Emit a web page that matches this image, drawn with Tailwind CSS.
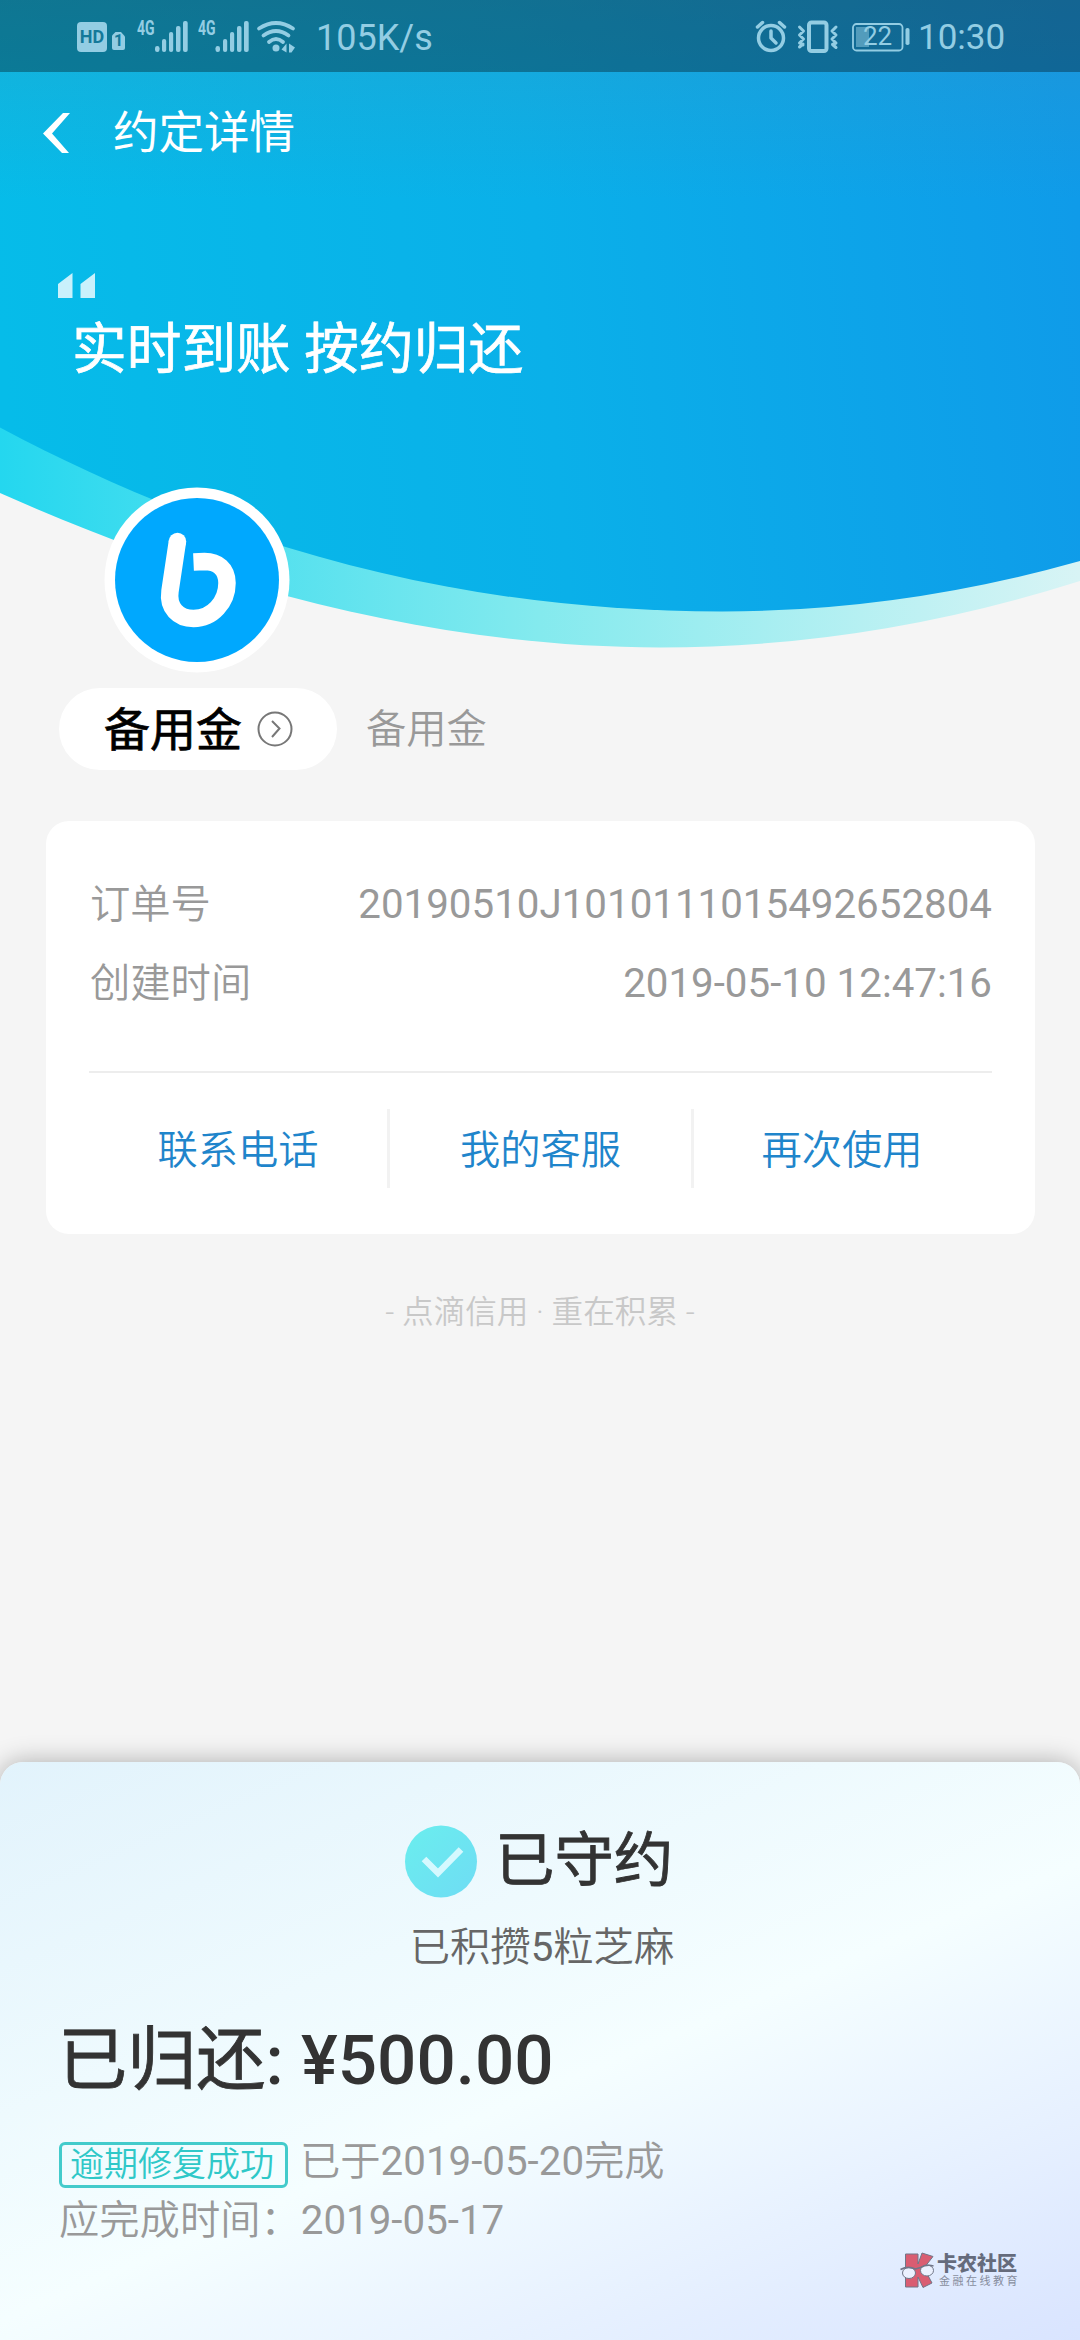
<!DOCTYPE html>
<html lang="zh-CN">
<head>
<meta charset="utf-8">
<title>约定详情</title>
<script src="https://cdn.jsdelivr.net/npm/@tailwindcss/browser@4"></script>
</head>
<body class="w-[1080px] h-[2340px] overflow-hidden bg-[#f5f5f5] font-['Roboto','Noto_Sans_CJK_SC',sans-serif]">
<div class="relative flex flex-col w-[1080px] h-[2340px]">
  <!-- header backdrop -->
  <svg class="absolute left-0 top-0" width="1080" height="660" viewBox="0 0 1080 660">
    <defs>
      <linearGradient id="sky" gradientUnits="userSpaceOnUse" x1="0" y1="330" x2="1080" y2="230"><stop offset="0" stop-color="#06bce9"/><stop offset=".5" stop-color="#0ab0e9"/><stop offset="1" stop-color="#0f9be9"/></linearGradient>
      <linearGradient id="band" gradientUnits="userSpaceOnUse" x1="0" y1="0" x2="1080" y2="0"><stop offset="0" stop-color="#24d7ef"/><stop offset=".5" stop-color="#84eaee"/><stop offset="1" stop-color="#d8f4f5"/></linearGradient>
      <linearGradient id="shade" x1="0" y1="0" x2="0" y2="1"><stop offset="0" stop-color="#5a8094" stop-opacity=".2"/><stop offset="1" stop-color="#5a8094" stop-opacity="0"/></linearGradient>
    </defs>
    <path d="M0 0H1080V581Q870 647.5 660 647.5C440 647.5 217 590 0 493Z" fill="url(#band)"/>
    <path d="M0 0H1080V561Q901 611.500 722 611.500C470 611.500 233 552 0 427.500Z" fill="url(#sky)"/>
    <rect width="1080" height="200" fill="url(#shade)"/>
  </svg>

  <!-- status bar -->
  <div class="relative h-[72px] shrink-0 bg-black/32 text-[#93cde3]">
    <svg class="absolute left-0 top-0" width="310" height="72" viewBox="0 0 310 72" fill="currentColor">
      <rect x="77" y="22" width="30" height="30" rx="4"/>
      <path d="M115.500 32H121L125 36.500V48Q125 50 123 50H114Q112 50 112 48V35.500Z"/>
      <rect x="155" y="46" width="4.500" height="6" rx="2.200"/><rect x="162" y="39" width="4.200" height="13" rx="2"/><rect x="169" y="32" width="4.200" height="20" rx="2"/><rect x="176" y="26" width="4.500" height="26" rx="2"/><rect x="183" y="21" width="4.700" height="31" rx="2"/>
      <rect x="215.500" y="46" width="4.500" height="6" rx="2.200"/><rect x="223" y="39" width="4.200" height="13" rx="2"/><rect x="230" y="32" width="4.200" height="20" rx="2"/><rect x="237" y="26" width="4.500" height="26" rx="2"/><rect x="244" y="21" width="4.700" height="31" rx="2"/>
      <g fill="none" stroke="currentColor" stroke-width="3.800" stroke-linecap="round"><path d="M259 28.500Q276 17.500 293 28.500"/><path d="M263.500 35.500Q276 26.500 288.500 35.500"/><path d="M269 42Q276 36 283 42"/></g>
      <circle cx="276" cy="48" r="3.500"/>
      <path d="M286.500 43.500V52.500L281.500 49.500ZM289 43.500L295 47.500L291.500 52.500H289Z"/>
    </svg>
    <span class="absolute left-[79px] top-[27px] w-[26px] h-5 leading-5 text-center text-[18px] font-bold text-[#14799a]">HD</span>
    <span class="absolute left-[113px] top-[33px] w-[11px] h-4 leading-4 text-center text-[16px] font-bold text-[#14799a]">1</span>
    <span class="absolute left-[137px] top-[18px] leading-5 text-[20px] font-bold origin-left scale-x-70">4G</span>
    <span class="absolute left-[198px] top-[18px] leading-5 text-[20px] font-bold origin-left scale-x-70">4G</span>
    <span class="absolute left-[316px] top-[18px] leading-10 text-[36px]">105K/s</span>
    <svg class="absolute left-[750px] top-0" width="165" height="72" viewBox="750 0 165 72" fill="none" stroke="currentColor">
      <circle cx="771" cy="38" r="12.500" stroke-width="3.500"/>
      <path d="M771 31V38L776 43" stroke-width="3.500" stroke-linecap="round" stroke-linejoin="round"/>
      <path d="M757.500 27L762.500 22.500M784.500 27L779.500 22.500" stroke-width="3.500" stroke-linecap="round"/>
      <rect x="809" y="22.500" width="17.500" height="28.500" rx="2.500" stroke-width="4"/>
      <path d="M799.500 27L803.500 31L799.500 35L803.500 39L799.500 43L803 45M799.500 47L803 44M836 27L832 31L836 35L832 39L836 43L832.500 44.500L836 47.500" stroke-width="3" stroke-linecap="round" stroke-linejoin="round"/>
      <rect x="853" y="24" width="49.500" height="26.500" rx="3.500" stroke-width="1.800"/>
      <rect x="856" y="27" width="13" height="20" fill="currentColor" fill-opacity=".5" stroke="none"/>
      <rect x="905.500" y="28" width="4" height="17" rx="1.800" fill="currentColor" stroke="none"/>
    </svg>
    <span class="absolute left-[863px] top-[22px] leading-7 text-[26px]">22</span>
    <span class="absolute left-[918px] top-[18px] leading-10 text-[35px]">10:30</span>
  </div>

  <!-- title bar -->
  <div class="relative flex items-center h-[122px] shrink-0 pl-[42px] text-white">
    <svg width="30" height="42" viewBox="0 0 30 42" fill="#fff"><path d="M21 1H28L10 21.500L27 41H20L1 21.500Z"/></svg>
    <h1 class="ml-[41px] pt-[2px] text-[45.500px] leading-[60px] font-normal">约定详情</h1>
  </div>

  <!-- slogan -->
  <div class="relative h-[292px] shrink-0 pt-[79px] pl-[58px] text-white">
    <svg width="38" height="25" viewBox="0 0 38 25" fill="#c9f1fc"><path d="M0 11L14.500 0V25H0ZM22.500 11L37 0V25H22.500Z"/></svg>
    <p class="ml-[14px] mt-[15px] text-[54.700px] leading-[72px] [-webkit-text-stroke:0.7px_#fff]">实时到账 按约归还</p>
  </div>

  <!-- merchant -->
  <div class="relative h-[202px] shrink-0 pl-[104px]">
    <svg width="186" height="188" viewBox="103.500 486 186 188">
      <circle cx="196.500" cy="580" r="92.500" fill="#fff"/><circle cx="196.500" cy="580" r="82" fill="#00a8fe"/>
      <path d="M177 541L169.500 591C167 608 178 618.500 193 618.500C212 618.500 226.500 602 226.500 583C226.500 569 217 561.500 204 561.500L193 562" fill="none" stroke="#fff" stroke-width="17.500"/>
      <circle cx="177" cy="541.500" r="8.700" fill="#fff"/>
    </svg>
  </div>
  <div class="relative flex items-center h-[82px] shrink-0 pl-[59px]">
    <div class="flex items-center w-[278px] h-[82px] rounded-full bg-white pl-[45px]">
      <span class="pt-[2px] text-[46px] leading-[60px] text-black [-webkit-text-stroke:0.7px_#000]">备用金</span>
      <svg class="ml-[14px]" width="38" height="38" viewBox="0 0 38 38" fill="none" stroke="#777"><circle cx="19" cy="19" r="16.500" stroke-width="2"/><path d="M16 11L23.500 18.500L16 27" stroke-width="2"/></svg>
    </div>
    <span class="ml-[29px] pt-[2px] text-[40.300px] leading-[56px] font-[350] text-[#999]">备用金</span>
  </div>

  <!-- order card -->
  <div class="relative mt-[51px] mx-[46px] w-[989px] h-[413px] shrink-0 rounded-[23px] bg-white px-[43px] pt-[45px] text-[40.300px]">
    <div class="flex justify-between h-[79px] items-center text-[#999]"><span class="ml-px font-[350]">订单号</span><span>20190510J1010111015492652804</span></div>
    <div class="flex justify-between h-[79px] items-center text-[#999]"><span class="ml-px font-[350]">创建时间</span><span>2019-05-10 12:47:16</span></div>
    <div class="mt-[47px] h-[2px] bg-[#ededed]"></div>
    <div class="mt-9 grid grid-cols-[301px_304px_298px] h-[79px] text-center font-[350] text-[#1f85cb]">
      <span class="h-[79px] leading-[83px] border-r-[3px] border-[#f2f2f2]">联系电话</span>
      <span class="h-[79px] leading-[83px] border-r-[3px] border-[#f2f2f2]">我的客服</span>
      <span class="h-[79px] leading-[83px] pr-[2px]">再次使用</span>
    </div>
  </div>
  <p class="mt-[59px] h-10 shrink-0 text-center text-[31.600px] leading-10 font-[350] text-[#c8c8c8]">- 点滴信用 · 重在积累 -</p>

  <!-- result sheet -->
  <div class="relative mt-auto h-[578px] shrink-0 rounded-t-[23px] bg-[linear-gradient(157deg,#e2f3fc_0%,#f5feff_54%,#d9e4ff_100%)] shadow-[0_0_26px_rgba(0,0,0,0.3)] pt-[62px]">
    <div class="flex items-center h-[76px] pl-[404px]">
      <svg width="74" height="74" viewBox="404 1825 74 74"><defs><linearGradient id="ok" x1="0" y1="0" x2="1" y2="1"><stop offset="0" stop-color="#6aeeee"/><stop offset="1" stop-color="#6fdcf4"/></linearGradient></defs><circle cx="441" cy="1861.500" r="36" fill="url(#ok)"/><path d="M424 1859L438 1873L461 1849.500" fill="none" stroke="#d5f9ff" stroke-width="6.500"/></svg>
      <h2 class="ml-[17px] -mt-[2px] text-[59.400px] leading-[76px] font-normal text-[#333] [-webkit-text-stroke:0.8px_#333]">已守约</h2>
    </div>
    <p class="mt-[20px] h-[56px] text-center pl-1 text-[40.300px] leading-[56px] font-[350] text-[#666]">已积攒<span class="font-normal">5</span>粒芝麻</p>
    <p class="mt-[41px] ml-[58px] h-[88px] text-[69.200px] leading-[88px] font-medium text-[#333]"><span class="font-normal [-webkit-text-stroke:0.8px_#333]">已归还</span>: ¥500.00</p>
    <div class="mt-[37px] ml-[59px] flex items-center h-[46px] text-[40.300px] text-[#999]">
      <span class="w-[229px] h-[46px] pr-[3px] border-[3px] border-[#43cbcb] rounded-md text-center leading-[39px] text-[34px] font-[350] text-[#2fc8c8]">逾期修复成功</span>
      <span class="ml-[12px] pb-[5px]"><span class="font-[350]">已于</span>2019-05-20<span class="font-[350]">完成</span></span>
    </div>
    <p class="mt-[5px] ml-[59px] h-[56px] text-[40.300px] leading-[56px] text-[#999]"><span class="font-[350]">应完成时间：</span>2019-05-17</p>
    <!-- community mark -->
    <div class="absolute left-[900px] top-[488px] flex gap-[3px] opacity-80">
      <svg width="34" height="40" viewBox="900 2250 34 40" stroke="#55596b" stroke-width="1">
        <path d="M905.500 2254H918V2264L922 2253L933 2256.500L924 2268L932 2283L923 2287.500L918 2277V2287H905.500Z" fill="#d83a50"/>
        <ellipse cx="909" cy="2273" rx="6.500" ry="5.500" fill="#eef3ff"/><ellipse cx="927" cy="2270.500" rx="6.500" ry="5.500" fill="#eef3ff"/>
        <path d="M900.500 2269.500Q908 2265.500 915.500 2269L920.500 2267.500Q927 2264 933.500 2266" fill="none" stroke-width="1.600"/>
      </svg>
      <div class="flex flex-col pt-[2px]">
        <b class="text-[20px] leading-[24px] font-black text-[#474c5c]">卡农社区</b>
        <span class="ml-[2px] text-[11px] leading-[12px] tracking-[2.500px] text-[#707586]">金融在线教育</span>
      </div>
    </div>
  </div>
</div>
</body>
</html>
